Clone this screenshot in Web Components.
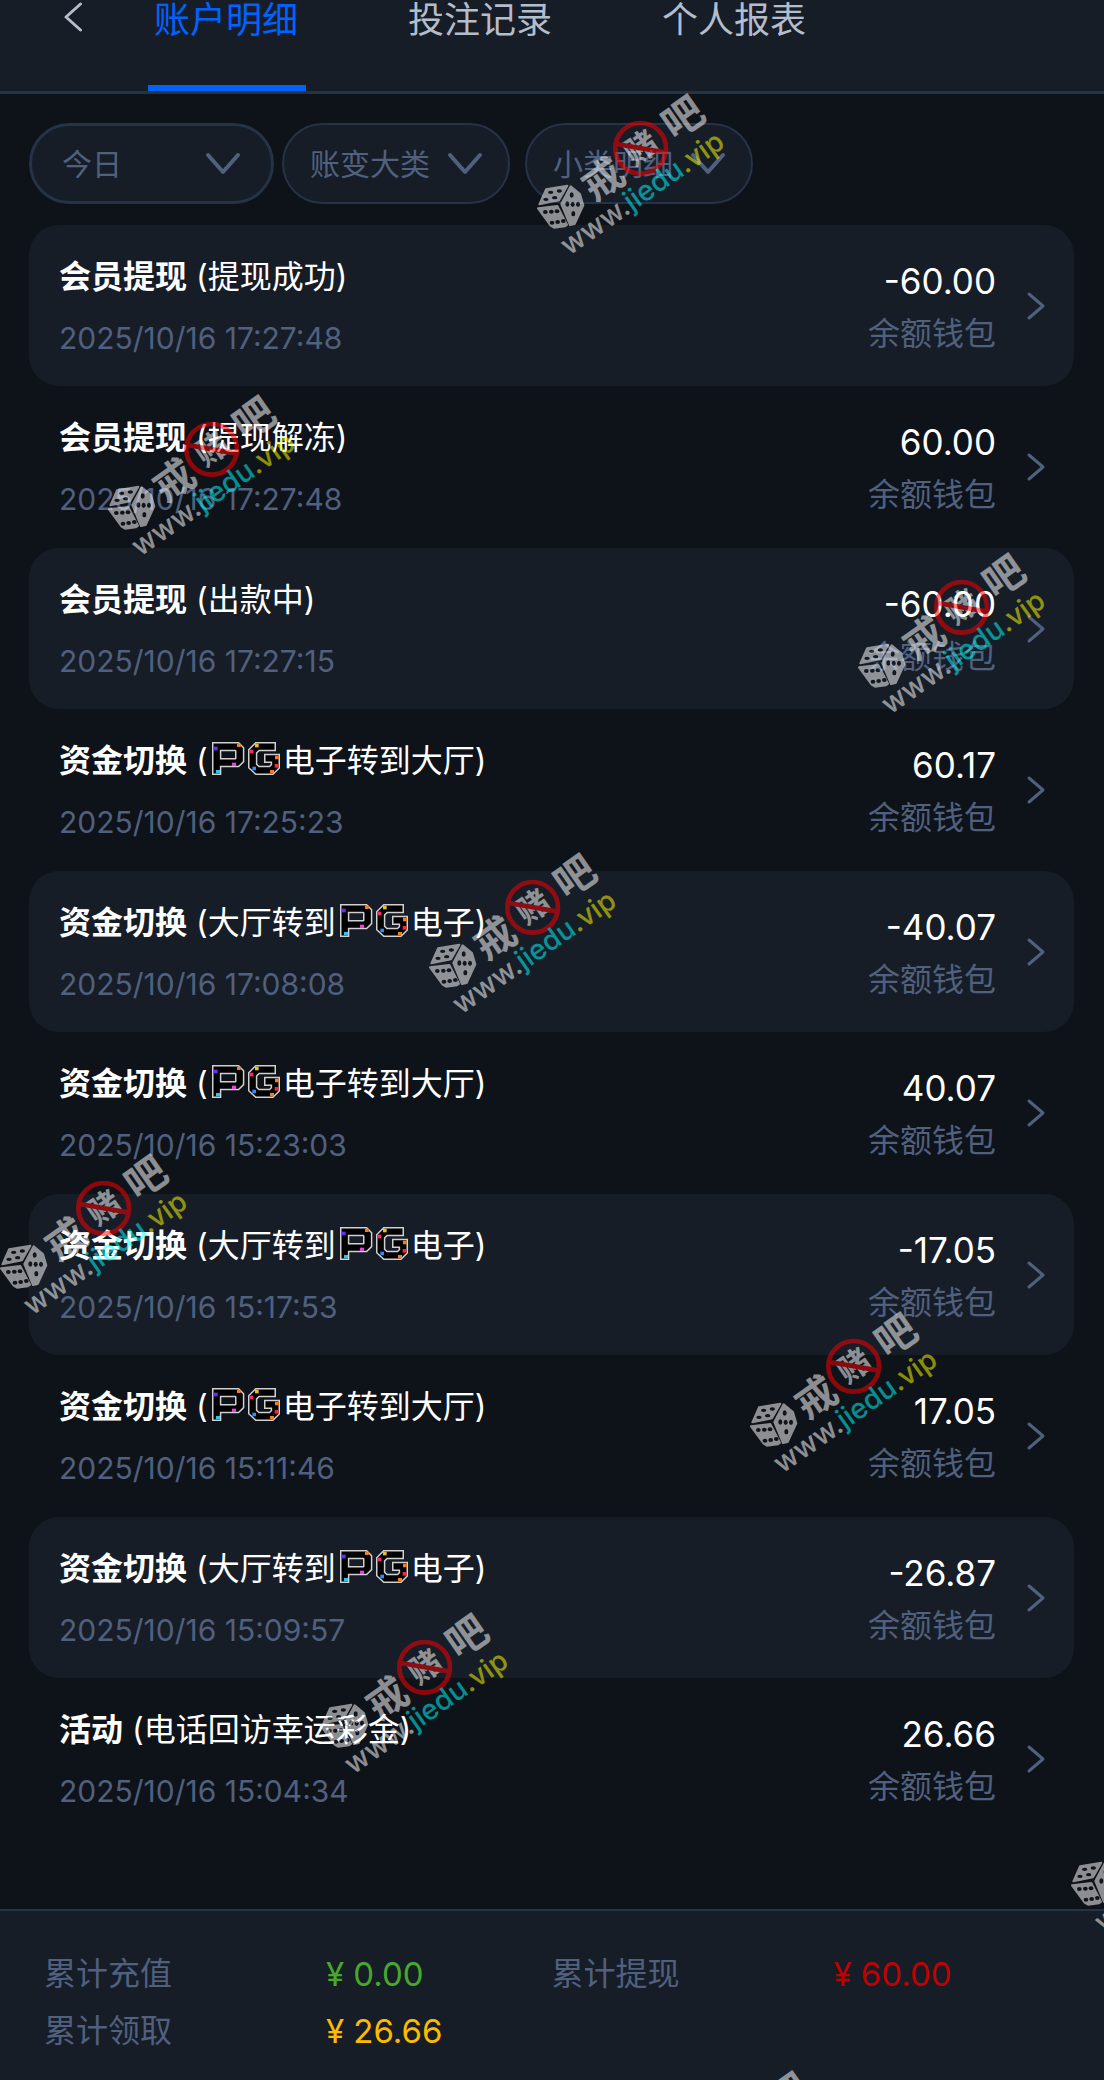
<!DOCTYPE html>
<html lang="zh-CN">
<head>
<meta charset="utf-8">
<meta name="viewport" content="width=device-width, initial-scale=1">
<title>账户明细</title>
<style>
    body {
        margin: 0;
        background-color: #0e1219;
        color: #fff;
        font-family: Inter, "Noto Sans CJK SC", sans-serif;
        font-size: 32px;
        line-height: 44px;
        --panel: #161d27;
        --line: #263246;
        --muted: #50607e;
    }
</style>
</head>
<body>
<account-page>
    <tab-header slot="header">
        <tab-link active>账户明细</tab-link>
        <tab-link>投注记录</tab-link>
        <tab-link>个人报表</tab-link>
    </tab-header>

    <filter-bar slot="filters">
        <filter-select class="wide" label="日期" value="今日"></filter-select>
        <filter-select label="大类" value="账变大类"></filter-select>
        <filter-select slot="detail" label="小类" value="小类明细"></filter-select>
    </filter-bar>

    <record-row time="2025/10/16 17:27:48" amount="-60.00"><b>会员提现</b> (提现成功)</record-row>
    <record-row time="2025/10/16 17:27:48" amount="60.00"><b>会员提现</b> (提现解冻)</record-row>
    <record-row time="2025/10/16 17:27:15" amount="-60.00"><b>会员提现</b> (出款中)</record-row>
    <record-row time="2025/10/16 17:25:23" amount="60.17"><b>资金切换</b> (<pg-logo></pg-logo>电子转到大厅)</record-row>
    <record-row time="2025/10/16 17:08:08" amount="-40.07"><b>资金切换</b> (大厅转到<pg-logo></pg-logo>电子)</record-row>
    <record-row time="2025/10/16 15:23:03" amount="40.07"><b>资金切换</b> (<pg-logo></pg-logo>电子转到大厅)</record-row>
    <record-row time="2025/10/16 15:17:53" amount="-17.05"><b>资金切换</b> (大厅转到<pg-logo></pg-logo>电子)</record-row>
    <record-row time="2025/10/16 15:11:46" amount="17.05"><b>资金切换</b> (<pg-logo></pg-logo>电子转到大厅)</record-row>
    <record-row time="2025/10/16 15:09:57" amount="-26.87"><b>资金切换</b> (大厅转到<pg-logo></pg-logo>电子)</record-row>
    <record-row time="2025/10/16 15:04:34" amount="26.66"><b>活动</b> (电话回访幸运彩金)</record-row>

    <total-bar slot="footer"></total-bar>
    <water-marks slot="overlay"></water-marks>
</account-page>

<script>
class AccountPage extends HTMLElement {
    constructor() {
        super();
        this.attachShadow({ mode: 'open' });
        this.shadowRoot.innerHTML = `
        <style>
            :host {
                display: flex;
                flex-direction: column;
                position: relative;
                min-height: 100vh;
                overflow: hidden;
            }
            main {
                display: flex;
                flex-direction: column;
                gap: 21px;
                flex: 1;
                padding: 29px 30px 60px 29px;
            }
            ::slotted(record-row:nth-of-type(odd)) {
                background-color: var(--panel);
            }
            ::slotted(record-row:nth-of-type(even)) {
                border-bottom: 1px solid transparent;
            }
        </style>
        <slot name="header"></slot>
        <main>
            <slot name="filters"></slot>
            <section><slot></slot></section>
        </main>
        <slot name="footer"></slot>
        <slot name="overlay"></slot>
        `;
    }
}

class TabHeader extends HTMLElement {
    constructor() {
        super();
        this.attachShadow({ mode: 'open' });
        this.shadowRoot.innerHTML = `
        <style>
            :host {
                display: flex;
                align-items: flex-start;
                background-color: var(--panel);
                border-bottom: 3px solid var(--line);
            }
            button {
                box-sizing: border-box;
                width: 148px;
                padding: 2px 0 0 62px;
                border: none;
                background: none;
                text-align: left;
            }
            svg {
                display: block;
            }
            nav {
                display: flex;
                gap: 96px;
            }
        </style>
        <button aria-label="返回">
            <svg width="22" height="30" viewBox="0 0 22 30" fill="none" stroke="#b4bdcb" stroke-width="3" stroke-linecap="round" stroke-linejoin="round"><path d="M18.500 2L4 15l14.500 13"/></svg>
        </button>
        <nav><slot></slot></nav>
        `;
    }
}

class TabLink extends HTMLElement {
    constructor() {
        super();
        this.attachShadow({ mode: 'open' });
        this.shadowRoot.innerHTML = `
        <style>
            :host {
                display: block;
            }
            a {
                display: block;
                padding: 0 8px 45px 6px;
                border-bottom: 6px solid transparent;
                color: #b4bdcb;
                font-size: 36px;
                line-height: 40px;
                text-decoration: none;
            }
            :host([active]) a {
                color: #0062ff;
                border-color: #0062ff;
            }
        </style>
        <a href="#"><slot></slot></a>
        `;
    }
}

class FilterBar extends HTMLElement {
    constructor() {
        super();
        this.attachShadow({ mode: 'open' });
        this.shadowRoot.innerHTML = `
        <style>
            :host {
                display: flex;
                gap: 15px;
            }
            div {
                display: flex;
                gap: 8px;
            }
        </style>
        <div><slot></slot></div>
        <slot name="detail"></slot>
        `;
    }
}

class FilterSelect extends HTMLElement {
    constructor() {
        super();
        this.attachShadow({ mode: 'open' });
        const value = this.getAttribute('value');
        this.shadowRoot.innerHTML = `
        <style>
            :host {
                display: grid;
                align-items: center;
                width: 228px;
                --edge: 2px;
                --inset: 26px;
            }
            :host(.wide) {
                width: 245px;
                --edge: 3px;
                --inset: 30px;
            }
            select, svg {
                grid-area: 1 / 1;
            }
            select {
                appearance: none;
                box-sizing: border-box;
                width: 100%;
                height: 81px;
                padding: 0 var(--inset);
                border: var(--edge) solid var(--line);
                border-radius: 41px;
                background-color: var(--panel);
                color: var(--muted);
                font-family: inherit;
                font-size: 30px;
            }
            svg {
                justify-self: end;
                margin-right: var(--inset);
                pointer-events: none;
            }
            :host(.wide) svg {
                margin-right: 32px;
            }
        </style>
        <select aria-label="${this.getAttribute('label')}"><option>${value}</option></select>
        <svg width="38" height="26" viewBox="0 0 38 26" fill="none" stroke="#50607e" stroke-width="4" stroke-linecap="round" stroke-linejoin="round"><path d="M4 4l15 17L34 4"/></svg>
        `;
    }
}

class RecordRow extends HTMLElement {
    constructor() {
        super();
        this.attachShadow({ mode: 'open' });
        this.shadowRoot.innerHTML = `
        <style>
            :host {
                display: block;
                border-radius: 30px;
            }
            a {
                display: flex;
                align-items: center;
                padding: 30px 28px 26px 30px;
                color: inherit;
                text-decoration: none;
            }
            .info {
                display: flex;
                flex-direction: column;
                gap: 17px;
                flex: 1;
            }
            .money {
                display: flex;
                flex-direction: column;
                gap: 9px;
                text-align: right;
            }
            .amount {
                font-size: 35px;
            }
            time {
                color: var(--muted);
                font-size: 30px;
            }
            .wallet {
                color: var(--muted);
            }
            svg {
                margin: 0 0 4px 29px;
            }
        </style>
        <a href="#">
            <div class="info">
                <div><slot></slot></div>
                <time>${this.getAttribute('time')}</time>
            </div>
            <div class="money">
                <div class="amount">${this.getAttribute('amount')}</div>
                <div class="wallet">余额钱包</div>
            </div>
            <svg width="21" height="30" viewBox="0 0 21 30" fill="none" stroke="#50607e" stroke-width="3" stroke-linecap="round" stroke-linejoin="round"><path d="M4 3l14 12L4 27"/></svg>
        </a>
        `;
    }
}

class PgLogo extends HTMLElement {
    constructor() {
        super();
        this.attachShadow({ mode: 'open' });
        this.shadowRoot.innerHTML = `
        <style>
            :host {
                display: inline-block;
                width: 68px;
                height: 34px;
                margin: 0 3px 0 4px;
                vertical-align: -4px;
            }
            svg {
                display: block;
            }
        </style>
        <svg width="68" height="34" viewBox="0 0 204 102" role="img" aria-label="PG">
            <g fill="none" stroke="#d0d0d0" stroke-width="28" stroke-linecap="square">
                <path d="M14 85V14H75L83 22V54L75 62H14"/>
                <path d="M178 14H136L122 28V72L136 85H178L190 73V49H170"/>
            </g>
            <g fill="none" stroke="#000" stroke-width="19" stroke-linecap="square">
                <path d="M14 85V14H75L83 22V54L75 62H14"/>
                <path d="M178 14H136L122 28V72L136 85H178L190 73V49H170"/>
            </g>
            <path fill="#6a2cff" d="M5 14h12v11H5z"/>
            <path fill="#ff7a18" d="M75 5h11v10H75zM189 41h11v11h-11zM174 84h12v10h-12z"/>
            <path fill="#f23be8" d="M60 62h12v10H60z"/>
            <path fill="#27c7f5" d="M12 84h12v10H12z"/>
            <path fill="#eebd20" d="M129 5h11v11h-11z"/>
            <path fill="#ff2878" d="M113 23h11v11h-11z"/>
            <path fill="#2f8dff" d="M121 74h11v11h-11z"/>
            <path fill="#ff2430" d="M188 66h11v11h-11z"/>
        </svg>
        `;
    }
}

class TotalBar extends HTMLElement {
    constructor() {
        super();
        this.attachShadow({ mode: 'open' });
        this.shadowRoot.innerHTML = `
        <style>
            :host {
                display: block;
                padding: 41px 45px 27px 44px;
                border-top: 2px solid var(--line);
                background-color: var(--panel);
            }
            dl {
                display: grid;
                grid-template-columns: repeat(2, 5fr 4fr);
                row-gap: 13px;
                margin: 0;
            }
            dt {
                color: var(--muted);
            }
            dd {
                margin: 0;
                font-size: 33px;
            }
            .in { color: #48a82a; }
            .out { color: #be0202; }
            .bonus { color: #fdbb00; }
        </style>
        <dl>
            <dt>累计充值</dt><dd class="in">¥ 0.00</dd>
            <dt>累计提现</dt><dd class="out">¥ 60.00</dd>
            <dt>累计领取</dt><dd class="bonus">¥ 26.66</dd>
        </dl>
        `;
    }
}

class WaterMarks extends HTMLElement {
    constructor() {
        super();
        // centre of the red ring of each stamp
        this._stamps = [
            [641, 148], [212, 449], [962, 607], [533, 907], [104, 1208],
            [854, 1366], [425, 1667], [1175, 1825], [746, 2125],
        ];
        this.attachShadow({ mode: 'open' });
        this.shadowRoot.innerHTML = `
        <style>
            :host {
                position: absolute;
                inset: 0;
                overflow: hidden;
                pointer-events: none;
            }
            svg {
                position: absolute;
                margin: -68px 0 0 -121px;
                opacity: 0.52;
            }
            .name {
                font-family: "Noto Sans CJK SC", sans-serif;
                font-weight: 700;
                text-anchor: middle;
            }
            .url {
                font-family: Inter, sans-serif;
                font-size: 85px;
                font-weight: 500;
            }
        </style>
        `;
        for (let stamp of this._stamps) {
            this._addStamp(stamp[0], stamp[1]);
        }
    }

    _addStamp(x, y) {
        this.shadowRoot.innerHTML += `
        <svg width="230" height="190" viewBox="0 0 690 570" style="left: ${x}px; top: ${y}px" fill="#fff">
            <g stroke="#fff" stroke-width="6" stroke-linejoin="round">
                <path d="M78 328L142 317 117 361 58 373Z"/>
                <path d="M54 385L112 378 141 434 135 439 102 443 92 437Z"/>
                <path d="M152 319L180 342 190 376 164 432 150 435 124 372Z"/>
            </g>
            <g fill="#10151d">
                <ellipse cx="92" cy="337" rx="8" ry="5"/><ellipse cx="118" cy="333" rx="8" ry="5"/>
                <ellipse cx="78" cy="358" rx="8" ry="5"/><ellipse cx="104" cy="353" rx="8" ry="5"/>
                <ellipse cx="76" cy="396" rx="7" ry="6"/><ellipse cx="94" cy="395" rx="7" ry="6"/>
                <ellipse cx="111" cy="394" rx="7" ry="6"/><ellipse cx="96" cy="428" rx="7" ry="6"/>
                <ellipse cx="113" cy="426" rx="7" ry="6"/><ellipse cx="130" cy="423" rx="7" ry="6"/>
                <ellipse cx="155" cy="345" rx="6" ry="8"/><ellipse cx="142" cy="372" rx="6" ry="8"/>
                <ellipse cx="158" cy="373" rx="6" ry="8"/><ellipse cx="174" cy="373" rx="6" ry="8"/>
                <ellipse cx="160" cy="401" rx="6" ry="8"/>
            </g>
            <text class="name" font-size="122" transform="translate(248 297) rotate(-35)" y="45">戒</text>
            <text class="name" font-size="98" transform="translate(362 202) rotate(-35)" y="36">赌</text>
            <text class="name" font-size="122" transform="translate(488 112) rotate(-35)" y="45">吧</text>
            <g fill="none" stroke="#f00" stroke-width="14">
                <circle cx="362" cy="205" r="76"/>
                <path d="M290 192L434 217"/>
            </g>
            <text class="url" transform="translate(147 528) rotate(-35)">www.<tspan fill="#0ff">jiedu</tspan><tspan fill="#ff0">.vip</tspan></text>
        </svg>
        `;
    }
}

customElements.define('account-page', AccountPage);
customElements.define('tab-header', TabHeader);
customElements.define('tab-link', TabLink);
customElements.define('filter-bar', FilterBar);
customElements.define('filter-select', FilterSelect);
customElements.define('record-row', RecordRow);
customElements.define('pg-logo', PgLogo);
customElements.define('total-bar', TotalBar);
customElements.define('water-marks', WaterMarks);
</script>
</body>
</html>
